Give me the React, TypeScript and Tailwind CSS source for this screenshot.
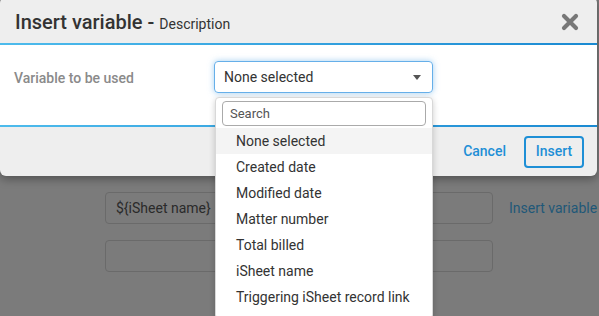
import React from 'react';

const OPTIONS = [
  'None selected',
  'Created date',
  'Modified date',
  'Matter number',
  'Total billed',
  'iSheet name',
  'Triggering iSheet record link',
];

function CloseIcon() {
  return (
    <svg width="18" height="18" viewBox="0 0 18 18">
      <path d="M3 3 L15 15 M15 3 L3 15" stroke="#777" strokeWidth="4.2" strokeLinecap="round" />
    </svg>
  );
}

export default function App() {
  return (
    <div className="relative w-[599px] h-[316px] overflow-hidden bg-[#7b7b7b] font-['Roboto',sans-serif]">
      {/* page behind the overlay */}
      <div className="pt-[192px] pl-[105px] flex flex-col gap-4">
        <div className="flex items-center gap-4">
          <div className="w-[388px] h-[32px] rounded border border-[#6a6a6a] px-[10px] flex items-center text-[14px] text-[#2a2a2a]">
            {'${iSheet name}'}
          </div>
          <span className="text-[14px] text-[#1f5878]">Insert variable</span>
        </div>
        <div className="w-[388px] h-[32px] rounded border border-[#6a6a6a]" />
      </div>

      {/* dialog */}
      <div className="absolute left-0 top-[-3px] w-[597px] rounded-md bg-[#eeeeee] shadow-[0_3px_10px_rgba(0,0,0,0.35)]">
        <div className="h-[46px] flex items-center justify-between pl-[15px] pr-[18px]">
          <h1 className="text-[20px] font-medium text-[#333] leading-none pt-[4px]">
            Insert variable - <span className="text-[14px] font-normal">Description</span>
          </h1>
          <div className="pt-[3px]">
            <CloseIcon />
          </div>
        </div>
        <div className="h-[2px] bg-gradient-to-r from-[#4dbbec] to-[#1a8ad2]" />
        <div className="bg-white h-[80px] flex items-start pl-[14px] pt-[16px]">
          <div className="w-[200px] text-[14px] font-medium text-[#8a8a8a] pt-[7px]">Variable to be used</div>
          <div className="w-[219px] h-[32px] rounded border border-[#66afe9] shadow-[0_0_6px_rgba(102,175,233,0.6)] flex items-center justify-between pl-[9px] pr-[11px] text-[14px] text-[#333]">
            <span>None selected</span>
            <span className="w-0 h-0 border-x-[4px] border-x-transparent border-t-[5px] border-t-[#555]" />
          </div>
        </div>
        <div className="h-[2px] bg-gradient-to-r from-[#4dbbec] to-[#1a8ad2]" />
        <div className="h-[49px] flex items-center justify-end gap-[18px] pr-[13px]">
          <span className="text-[14px] font-medium text-[#1e8fd6]">Cancel</span>
          <div className="h-[32px] w-[60px] rounded border-2 border-[#1e8fd6] flex items-center justify-center text-[14px] font-medium text-[#1e8fd6]">
            Insert
          </div>
        </div>
      </div>

      {/* open dropdown */}
      <div className="absolute left-[215px] top-[97px] w-[218px] bg-white rounded border border-[#d8d8d8] shadow-[0_2px_6px_rgba(0,0,0,0.2)] pb-2">
        <div className="px-[6px] pt-[3px] pb-[2px]">
          <div className="h-[25px] rounded border border-[#aaa] px-[7px] flex items-center text-[13px] text-[#555]">Search</div>
        </div>
        <ul>
          {OPTIONS.map((o, i) => (
            <li
              key={o}
              className={`h-[26px] flex items-center pl-[20px] text-[14px] text-[#333] ${i === 0 ? 'bg-[#f4f4f4]' : ''}`}
            >
              {o}
            </li>
          ))}
        </ul>
      </div>
    </div>
  );
}
